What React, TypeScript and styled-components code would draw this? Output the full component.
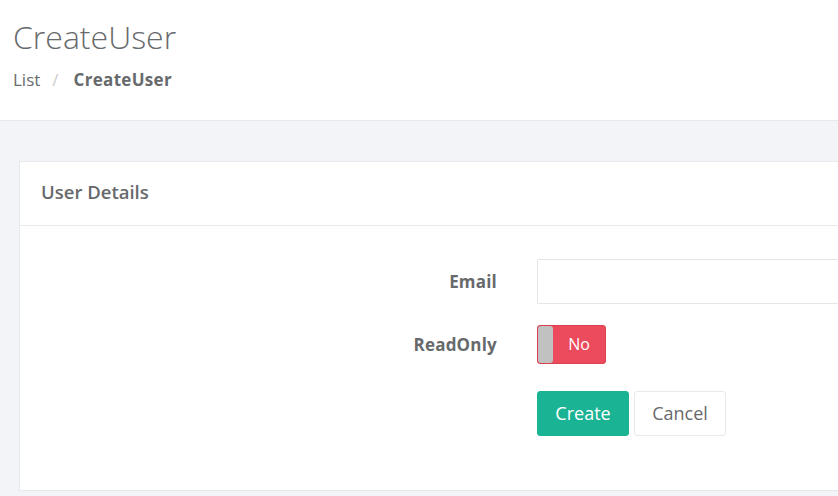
import * as React from "react";
import styled, { createGlobalStyle } from "styled-components";

const Global = createGlobalStyle`
  html, body {
    margin: 0;
    padding: 0;
    background: #f3f4f7;
    overflow: hidden;
  }
  body {
    font-family: "Open Sans", "Liberation Sans", sans-serif;
    color: #676a6c;
  }
`;

const Page = styled.div`
  width: 1300px;
  min-height: 496px;
  background: #f3f4f7;
`;

const Heading = styled.div`
  background: #fff;
  border-bottom: 1px solid #e7eaec;
  height: 121px;
  box-sizing: border-box;
  padding: 15px 13px 0;
`;

const PageTitle = styled.h2`
  margin: 0;
  font-size: 32px;
  font-weight: 300;
  line-height: 44px;
  color: #676a6c;
`;

const Crumbs = styled.ol`
  list-style: none;
  margin: 8px 0 0;
  padding: 0;
  display: flex;
  font-size: 17px;
  line-height: 26px;
`;

const Crumb = styled.li<{ $active?: boolean }>`
  font-weight: ${(p) => (p.$active ? 700 : 400)};
  letter-spacing: ${(p) => (p.$active ? "0.3px" : "0")};
`;

const Divider = styled.li`
  color: #ccc;
  padding: 0 15px 0 12px;
`;

const Content = styled.div`
  padding: 40px 0 6px 19px;
`;

const Card = styled.div`
  background: #fff;
  border: 1px solid #e7eaec;
`;

const CardTitle = styled.div`
  height: 64px;
  border-bottom: 1px solid #e7eaec;
  display: flex;
  align-items: center;
  padding-left: 21px;
  padding-bottom: 5px;
  box-sizing: border-box;
  font-size: 18.5px;
  font-weight: 600;
`;

const CardBody = styled.form`
  padding: 33px 0 54px;
  display: grid;
  grid-template-columns: 477px 1fr;
  column-gap: 40px;
  row-gap: 21px;
  align-items: center;
`;

const Label = styled.label`
  text-align: right;
  font-size: 17px;
  font-weight: 700;
  letter-spacing: 0.2px;
`;

const Input = styled.input`
  height: 45px;
  box-sizing: border-box;
  border: 1px solid #e5e6e7;
  border-radius: 1px;
  width: 760px;
  font: inherit;
  padding: 6px 12px;
  outline: none;
`;

const Toggle = styled.button`
  width: 69px;
  height: 39px;
  border: 1px solid #d9414f;
  border-radius: 3px;
  background: #ec4b5d;
  color: #fff;
  font-family: inherit;
  font-size: 16px;
  padding: 0;
  display: flex;
  align-items: center;
  box-sizing: border-box;
`;

const Knob = styled.span`
  width: 15px;
  height: 37px;
  background: #c1c1c1;
  border-radius: 3px;
  flex: none;
`;

const ToggleText = styled.span`
  flex: 1;
  text-align: center;
  padding-bottom: 2px;
`;

const Actions = styled.div`
  grid-column: 2;
  display: flex;
  gap: 5px;
  margin-top: 6px;
`;

const Button = styled.button<{ $primary?: boolean }>`
  width: 92px;
  height: 45px;
  border-radius: 3px;
  font-family: inherit;
  font-size: 18px;
  padding: 0 0 2px;
  border: 1px solid ${(p) => (p.$primary ? "#1ab394" : "#e7eaec")};
  background: ${(p) => (p.$primary ? "#1ab394" : "#fff")};
  color: ${(p) => (p.$primary ? "#fff" : "#676a6c")};
  cursor: pointer;
`;

export default function App() {
  return (
    <Page>
      <Global />
      <Heading>
        <PageTitle>CreateUser</PageTitle>
        <Crumbs>
          <Crumb>List</Crumb>
          <Divider>/</Divider>
          <Crumb $active>CreateUser</Crumb>
        </Crumbs>
      </Heading>
      <Content>
        <Card>
          <CardTitle>User Details</CardTitle>
          <CardBody onSubmit={(e) => e.preventDefault()}>
            <Label htmlFor="email">Email</Label>
            <div>
              <Input id="email" type="email" />
            </div>
            <Label>ReadOnly</Label>
            <div>
              <Toggle type="button">
                <Knob />
                <ToggleText>No</ToggleText>
              </Toggle>
            </div>
            <Actions>
              <Button $primary type="submit">Create</Button>
              <Button type="button">Cancel</Button>
            </Actions>
          </CardBody>
        </Card>
      </Content>
    </Page>
  );
}
